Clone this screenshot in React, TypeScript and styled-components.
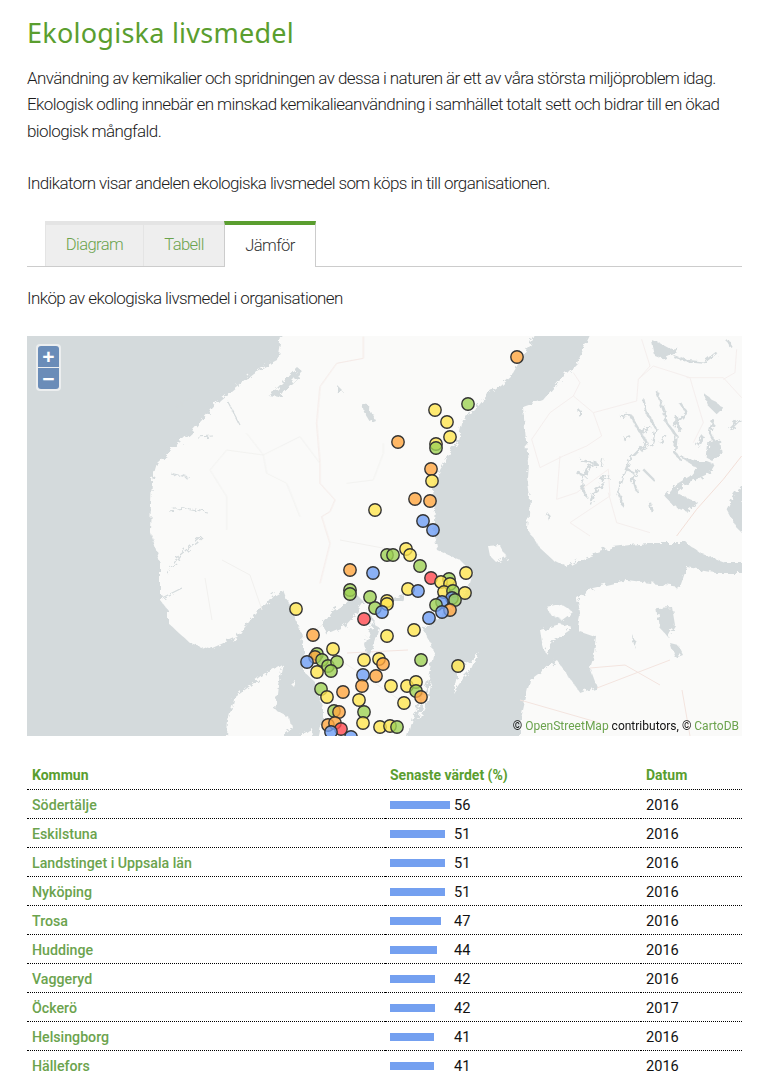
import React from "react";
import styled, { createGlobalStyle } from "styled-components";

const Global = createGlobalStyle`
  html, body { margin: 0; padding: 0; background: #fff; }
  body { font-family: Roboto, "Liberation Sans", sans-serif; color: #1c1c1c; overflow: hidden; }
`;
const Page = styled.main`
  width: 715px;
  height: 1079px;
  padding-left: 27px;
  overflow: hidden;
`;
const Title = styled.h1`
  margin: 0;
  padding-top: 14px;
  height: 38px;
  line-height: 38px;
  font-family: "Noto Sans", sans-serif;
  font-weight: 400;
  font-size: 27px;
  letter-spacing: 0.25px;
  color: #5a9e2f;
`;
const Lead = styled.p`
  margin: 13px 0 0;
  font-size: 17px;
  font-weight: 300;
  letter-spacing: -0.6px;
  line-height: 26.25px;
  color: #1c1c1c;
`;
const Tabs = styled.nav`
  display: flex;
  margin-top: 25px;
  padding-left: 18px;
  height: 45px;
  border-bottom: 1px solid #ccc;
`;
const Tab = styled.a<{ $active?: boolean; $w: number }>`
  box-sizing: border-box;
  width: ${(p) => p.$w}px;
  height: ${(p) => (p.$active ? 46 : 45)}px;
  padding-bottom: 2px;
  display: flex;
  align-items: center;
  justify-content: center;
  font-size: 16.6px;
  font-weight: 300;
  letter-spacing: -0.6px;
  color: ${(p) => (p.$active ? "#333" : "#6ba34d")};
  background: ${(p) => (p.$active ? "#fff" : "#eee")};
  border-top: ${(p) => (p.$active ? "4px solid #5a9e2f" : "4px solid #e4e4e4")};
  border-left: 1px solid ${(p) => (p.$active ? "#ccc" : "#e4e4e4")};
  border-right: ${(p) => (p.$active ? "1px solid #ccc" : "0")};
`;
const Sub = styled.p`
  margin: 18px 0 0;
  height: 26px;
  line-height: 26px;
  font-size: 17px;
  font-weight: 300;
  letter-spacing: -0.6px;
`;
const MapBox = styled.section`
  position: relative;
  margin-top: 25px;
  width: 715px;
  height: 400px;
  overflow: hidden;
  background: #d4dadc;
`;
const MapSvg = styled.svg`
  display: block;
`;
const ZoomCtl = styled.div`
  position: absolute;
  left: 9px;
  top: 8px;
  width: 25px;
  padding: 2px;
  box-sizing: border-box;
  border-radius: 4px;
  background: rgba(255, 255, 255, 0.55);
  display: flex;
  flex-direction: column;
  gap: 1px;
`;
const ZoomBtn = styled.button<{ $pos: "top" | "bottom" }>`
  all: unset;
  height: 21px;
  text-align: center;
  background: #6a8cb8;
  color: #fff;
  font: 700 21px/21px "Liberation Sans", sans-serif;
  border-radius: ${(p) => (p.$pos === "top" ? "3px 3px 0 0" : "0 0 3px 3px")};
`;
const Attribution = styled.div`
  position: absolute;
  right: 3px;
  bottom: 3px;
  font-size: 12px;
  line-height: 14px;
  color: #111;
`;
const Link = styled.a`
  color: #6ba34d;
`;
const Table = styled.table`
  margin-top: 25px;
  width: 715px;
  table-layout: fixed;
  border-collapse: separate;
  border-spacing: 0;
  font-size: 14.6px;
`;
const Th = styled.th<{ $w: number }>`
  width: ${(p) => p.$w}px;
  box-sizing: border-box;
  height: 29px;
  padding: 0 5px;
  text-align: left;
  font-size: 14px;
  font-weight: 700;
  color: #5a9e2f;
  border-bottom: 1px dotted #000;
`;
const Td = styled.td`
  box-sizing: border-box;
  height: 29px;
  padding: 1px 5px 0;
  border-bottom: 1px dotted #000;
  color: #111;
`;
const Name = styled(Td)`
  color: #6ba34d;
  font-weight: 500;
  font-size: 14.2px;
`;
const BarCell = styled.div`
  display: flex;
  align-items: center;
`;
const BarTrack = styled.div`
  width: 64px;
`;
const Bar = styled.div`
  height: 8px;
  margin-top: 1px;
  background: #74a0f0;
`;

const C: Record<string, string> = { y: "#ffe650", o: "#ffa640", g: "#9fd255", b: "#6f9ff5", r: "#ff4a50" };
const markers: [number, number, string][] = [
  [517,357,"o"],[468,404,"g"],[435,410,"y"],[447,422,"y"],[450,437,"y"],[398,442,"o"],[436,444,"y"],[436,448,"g"],
  [431,469,"o"],[432,481,"y"],[415,499,"o"],[430,501,"o"],[375,510,"y"],[423,521,"b"],[433,530,"b"],
  [406,549,"y"],[410,555,"y"],[387,555,"g"],[393,555,"g"],[420,566,"g"],[350,570,"o"],[373,573,"b"],[466,573,"y"],
  [449,579,"g"],[431,578,"r"],[441,582,"y"],[450,584,"y"],[408,589,"y"],[418,591,"b"],[444,592,"y"],[453,591,"g"],
  [465,593,"y"],[350,590,"g"],[350,594,"g"],[370,597,"g"],[387,601,"y"],[387,604,"y"],[452,598,"b"],[455,600,"g"],
  [442,602,"b"],[436,605,"g"],[375,608,"g"],[450,610,"o"],[382,612,"b"],[442,612,"b"],[296,609,"y"],[364,619,"r"],
  [429,618,"b"],[414,630,"y"],[387,636,"y"],[313,635,"o"],[333,649,"y"],[317,654,"g"],[315,657,"o"],[307,662,"b"],
  [322,660,"g"],[328,666,"g"],[337,662,"g"],[331,671,"g"],[317,672,"y"],[364,660,"y"],[379,659,"y"],[383,664,"o"],
  [421,660,"g"],[458,666,"y"],[363,675,"b"],[376,676,"o"],[362,686,"o"],[391,686,"y"],[407,686,"y"],[416,682,"y"],
  [416,691,"g"],[421,697,"o"],[321,689,"g"],[343,692,"o"],[327,697,"y"],[359,700,"y"],[404,703,"y"],[334,711,"g"],
  [339,712,"o"],[364,712,"g"],[363,723,"y"],[328,725,"o"],[335,723,"o"],[341,729,"r"],[331,732,"b"],[351,737,"b"],[380,727,"y"],
  [390,726,"y"],[397,727,"g"],
];
const rows: [string, number, number][] = [
  ["Södertälje",56,2016],["Eskilstuna",51,2016],["Landstinget i Uppsala län",51,2016],["Nyköping",51,2016],["Trosa",47,2016],
  ["Huddinge",44,2016],["Vaggeryd",42,2016],["Öckerö",42,2017],["Helsingborg",41,2016],["Hällefors",41,2016],
];

const finlandLakes = [
  "M365 12L390 22L420 38L445 35L430 55L400 70L375 60Z",
  "M520 170L545 190L580 215L560 235L535 210Z",
  "M445 360L500 375L530 375L555 385L540 410L500 430L470 440L440 470L480 490L505 500L470 525L430 510L405 480L430 450L480 420L500 395Z",
  "M535 320L570 310L575 350L550 375L530 365Z",
  "M144 220L156 222L156 238L148 242Z",
];
const finlandRivers = [
  "M430 60L470 75L520 80L560 50","M590 10L605 35","M270 240L300 235L320 270L350 320L300 370L280 420L265 470L280 510",
  "M340 190L350 230L380 280L370 320L335 345","M380 165L400 220L410 260L440 300L435 350L450 370","M450 200L470 230L430 270",
  "M550 250L540 290L560 330","M150 372L200 382L170 400L155 450L170 485","M220 370L215 392","M225 440L190 470L180 505",
  "M310 430L320 465","M340 400L375 435","M360 500L365 525","M52 530L60 552","M325 400L305 440","M630 250L600 280","M440 240L450 290",
  "M300 300L280 310","M330 290L360 270","M290 400L310 410","M410 300L390 320","M520 300L500 330","M210 430L240 420","M165 420L140 410",
];
const fiBorders = ["M335 10L360 90L325 130L320 195L190 230L130 180L150 140L130 110","M325 130L370 90L480 125L490 160L520 260L490 320","M470 125L580 125L635 185","M620 40L615 110L580 130",
  "M190 230L215 300L170 330L100 360L30 395L5 310L60 230L130 180","M90 360L80 490L140 470L235 400L240 480L120 560L180 600","M235 470L260 560L360 590"];
const fiPink = ["M635 360L580 430L500 520L440 600"];

const App = () => (
  <Page>
    <Global />
    <Title>Ekologiska livsmedel</Title>
    <Lead>
      Användning av kemikalier och spridningen av dessa i naturen är ett av våra största miljöproblem idag. Ekologisk odling innebär en minskad kemikalieanvändning i samhället totalt sett och bidrar till en ökad biologisk mångfald.
      <br /><br />
      Indikatorn visar andelen ekologiska livsmedel som köps in till organisationen.
    </Lead>
    <Tabs>
      <Tab $w={98}>Diagram</Tab>
      <Tab $w={81}>Tabell</Tab>
      <Tab $w={92} $active>Jämför</Tab>
    </Tabs>
    <Sub>Inköp av ekologiska livsmedel i organisationen</Sub>
    <MapBox>
      <MapSvg width="715" height="400" viewBox="27 336 715 400">
        <defs>
          <filter id="coast" x="-5%" y="-5%" width="110%" height="110%">
            <feTurbulence type="fractalNoise" baseFrequency="0.16" numOctaves="3" seed="4" />
            <feDisplacementMap in="SourceGraphic" scale="8" />
            <feGaussianBlur stdDeviation="0.3" />
          </filter>
          <filter id="lakes" x="-5%" y="-5%" width="110%" height="110%">
            <feTurbulence type="fractalNoise" baseFrequency="0.22" numOctaves="2" seed="9" />
            <feDisplacementMap in="SourceGraphic" scale="7" />
            <feGaussianBlur stdDeviation="0.3" />
          </filter>
          <filter id="soft"><feGaussianBlur stdDeviation="0.4" /></filter>
        </defs>
        <g filter="url(#coast)" fill="#fafaf9">
          <path d="M284 320L540 320L530 343L513 373L500 385L487 393L475 408L463 420L458 440L450 453L440 470L433 490L435 510L433 530L437 550L460 560L473 573L468 590L460 600L437 620L423 630L432 645L433 655L427 682L420 700L413 718L405 750L317 750L323 723L323 709L315 682L303 671L303 645L300 630L293 612L287 600L283 590L278 592L273 595L265 605L253 617L237 637L210 649L190 643L168 623L168 610L160 600L160 563L150 530L152 480L157 463L193 430L220 400L253 373L277 360Z" />
          <path d="M597 320L577 363L560 380L543 400L523 407L528 463L527 477L530 497L528 530L540 548L553 560L567 567L580 560L613 547L647 543L687 543L700 553L727 563L760 563L760 320Z" />
          <path d="M760 573L720 573L687 567L680 587L627 580L593 588L577 600L580 617L577 630L597 637L595 653L590 668L597 687L580 693L573 683L557 660L530 680L520 723L520 750L760 750Z" />
          <path d="M283 663L263 676L233 699L227 720L225 750L290 750L283 734L292 727L290 718L275 710L278 685Z" />
          <path d="M453 693L458 672L480 652L472 670L462 680Z" />
          <path d="M417 723L425 695L432 680L428 700Z" />
          <path d="M546 607L560 604L573 612L562 620L552 616Z" />
          <path d="M540 630L560 624L573 628L555 640L545 653L542 642Z" />
          <path d="M488 546L500 545L507 558L497 563L490 556Z" />
          <path d="M290 683L296 681L294 687Z" />
          <path d="M302 735L312 728L314 745L300 745Z" />
        </g>
        <g filter="url(#soft)">
          <g transform="translate(530 336) scale(.3333)">
            <g fill="none" stroke="#f3ecea" strokeWidth="2.5">
              {fiBorders.map((d) => <path key={d} d={d} />)}
            </g>
            <g fill="none" stroke="#f2dfd8" strokeWidth="3">
              {fiPink.map((d) => <path key={d} d={d} />)}
            </g>
          </g>
          <g transform="translate(20 330) scale(.3333)" fill="none" stroke="#f3e6e2" strokeWidth="2.5">
            <path d="M1030 20L1030 85L950 100L900 170L890 280L900 400L900 460L945 510L930 545L905 560L930 640L900 760" />
            <path d="M570 420L620 360L730 375L840 320L900 400M570 420L620 500L620 600M680 310L730 375L740 430L800 460L840 560M1090 340L1090 370L1060 450L980 460" stroke="#f1f0ee" />
          </g>
          <path d="M347 653L408 650M597 688L670 660M682 690L690 736M520 700L600 723M590 668L625 665L660 685" fill="none" stroke="#f3e4df" strokeWidth="1" />
          <path d="M222 560L250 575L262 610M205 578L212 620M340 540L420 555M300 640L360 600M340 660L400 700" fill="none" stroke="#f1f0ee" strokeWidth="1" />
        </g>
        <g filter="url(#lakes)">
          <g fill="#d4dadc">
            <path d="M356 594L345 604L334 610L323 624L326 634L345 626L356 614L364 602Z" />
            <path d="M373 624L380 628L374 646L368 658L365 645Z" />
            <path d="M392 597L404 594L402 602L394 602Z" />
            <path d="M362 404L368 405L375 420L370 422L364 412Z" />
            <path d="M337 385L342 390L338 394Z" />
            <path d="M269 396L285 380L298 368L303 372L290 385L280 398Z" />
            <path d="M657 608L672 607L675 625L668 637L660 628Z" />
            <path d="M670 643L678 645L683 655L675 658Z" />
            <path d="M633 635L636 642L634 648Z" />
          </g>
          <g fill="none" stroke="#d4dadc" strokeWidth="1.2">
            <path d="M167 510L185 508L207 512M170 473L190 478M197 437L213 436M167 573L180 555L202 537M162 598L182 588M175 408L190 398M228 402L240 425M368 610L375 625" />
          </g>
          <g transform="translate(530 336) scale(.3333)">
            <g fill="#d4dadc">
              {finlandLakes.map((d) => <path key={d} d={d} />)}
              <path d="M640 440L605 490L590 520L620 575L640 595Z" />
            </g>
            <g fill="none" stroke="#d4dadc" strokeWidth="7" strokeLinejoin="round">
              {finlandRivers.map((d) => <path key={d} d={d} />)}
            </g>
          </g>
        </g>
        {markers.map(([x, y, c], i) => (
          <circle key={i} cx={x} cy={y} r="6.2" fill={C[c]} fillOpacity="0.8" stroke="#333" strokeWidth="1.4" />
        ))}
      </MapSvg>
      <ZoomCtl>
        <ZoomBtn $pos="top">+</ZoomBtn>
        <ZoomBtn $pos="bottom">−</ZoomBtn>
      </ZoomCtl>
      <Attribution>© <Link>OpenStreetMap</Link> contributors, © <Link>CartoDB</Link></Attribution>
    </MapBox>
    <Table>
      <thead>
        <tr>
          <Th $w={358}>Kommun</Th>
          <Th $w={256}>Senaste värdet (%)</Th>
          <Th $w={101}>Datum</Th>
        </tr>
      </thead>
      <tbody>
        {rows.map(([n, v, d]) => (
          <tr key={n}>
            <Name>{n}</Name>
            <Td>
              <BarCell>
                <BarTrack><Bar style={{ width: `${Math.round(v * 1.075)}px` }} /></BarTrack>
                {v}
              </BarCell>
            </Td>
            <Td>{d}</Td>
          </tr>
        ))}
      </tbody>
    </Table>
  </Page>
);
export default App;
